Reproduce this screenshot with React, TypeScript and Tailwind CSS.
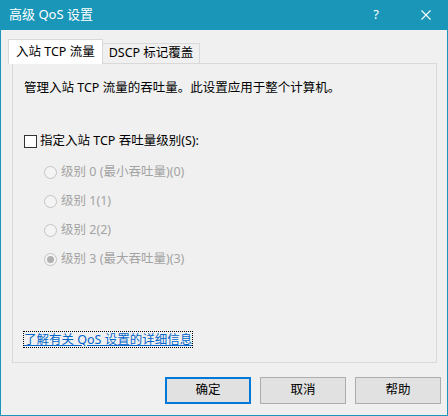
import React from 'react';

const font = { fontFamily: '"Noto Sans", "Noto Sans CJK SC", sans-serif' };

function Radio({ label, checked }: { label: string; checked?: boolean }) {
  return (
    <div className="flex items-center h-[29px] pl-[20px]">
      <span className="flex items-center justify-center w-[13px] h-[13px] rounded-full border border-[#c4c4c4] bg-[#f4f4f4] shrink-0">
        {checked && <span className="w-[7px] h-[7px] rounded-full bg-[#b0b0b0]" />}
      </span>
      <span className="ml-[4px] text-[12.5px] text-[#a3a3a3]">{label}</span>
    </div>
  );
}

function DialogButton({ label, primary }: { label: string; primary?: boolean }) {
  return (
    <button
      className={
        primary
          ? 'w-[86px] h-[27px] bg-[#e1e1e1] border-2 border-[#0078d7] text-[12.5px] text-black'
          : 'w-[86px] h-[27px] bg-[#e1e1e1] border border-[#adadad] text-[12.5px] text-black'
      }
    >
      {label}
    </button>
  );
}

export default function App() {
  return (
    <div
      className="w-[448px] h-[416px] flex flex-col bg-[#f0f0f0] border border-t-0 border-[#1996b8] overflow-hidden"
      style={font}
    >
      {/* Title bar */}
      <div className="h-[30px] shrink-0 bg-[#1996b8] flex items-center pl-[8px] pr-[16px] text-white">
        <span className="text-[13px]">高级 QoS 设置</span>
        <span className="ml-auto text-[13px] mr-[42px]">?</span>
        <svg width="10" height="10" viewBox="0 0 10 10" className="shrink-0">
          <path d="M0.5 0.5 L9.5 9.5 M9.5 0.5 L0.5 9.5" stroke="white" strokeWidth="1.1" />
        </svg>
      </div>

      {/* Tabs */}
      <div className="flex items-end h-[33px] pl-[7px] shrink-0">
        <div className="relative z-10 h-[25px] -mb-px px-[7px] flex items-center bg-white border border-b-0 border-[#d9d9d9] text-[12.5px] text-black">
          入站 TCP 流量
        </div>
        <div className="h-[20px] px-[6px] flex items-center bg-[#f0f0f0] border border-l-0 border-b-0 border-[#d9d9d9] text-[12.5px] text-black">
          DSCP 标记覆盖
        </div>
      </div>

      {/* Panel */}
      <div className="ml-[11px] w-[425px] h-[300px] shrink-0 border border-[#d9d9d9] flex flex-col pl-[11px] pt-[15px]">
        <div className="h-[18px] flex items-center text-[12.5px] text-black">
          管理入站 TCP 流量的吞吐量。此设置应用于整个计算机。
        </div>
        <div className="mt-[35px] h-[18px] flex items-center">
          <span className="w-[13px] h-[13px] border border-[#333333] bg-white shrink-0" />
          <span className="ml-[3px] text-[12.5px] text-black">指定入站 TCP 吞吐量级别(S):</span>
        </div>
        <div className="mt-[8px] flex flex-col">
          <Radio label="级别 0 (最小吞吐量)(0)" />
          <Radio label="级别 1(1)" />
          <Radio label="级别 2(2)" />
          <Radio label="级别 3 (最大吞吐量)(3)" checked />
        </div>
        <div className="mt-auto mb-[12px]">
          <span className="inline-block outline outline-1 outline-dotted outline-black text-[12.5px] leading-[15px] text-[#0066cc] underline">
            了解有关 QoS 设置的详细信息
          </span>
        </div>
      </div>

      {/* Buttons */}
      <div className="flex justify-end gap-[9px] pr-[6px] mt-[14px]">
        <DialogButton label="确定" primary />
        <DialogButton label="取消" />
        <DialogButton label="帮助" />
      </div>
    </div>
  );
}
